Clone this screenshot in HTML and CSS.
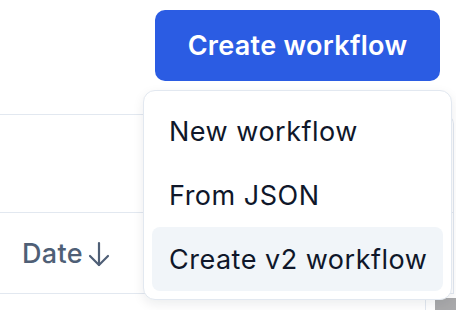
FILE: index.html
```html
<!DOCTYPE html>
<html lang="en">
  <head>
    <meta charset="UTF-8">
    <meta name="viewport" content="width=device-width, initial-scale=1.0">
    <title>Workflows</title>
    <link rel="stylesheet" href="styles.css">
  </head>
  <body>
    <div class="page">
      <div class="toolbar">
        <button class="create-btn">Create workflow</button>
      </div>

      <div class="table">
        <div class="row row-empty"></div>
        <div class="row row-head">
          <span class="col-date">
            Date
            <svg class="sort-icon" width="22" height="26" viewBox="0 0 22 26" fill="none" stroke="currentColor" stroke-width="2.2" stroke-linecap="round" stroke-linejoin="round">
              <path d="M11 2v22"></path>
              <path d="M2 15l9 9 9-9"></path>
            </svg>
          </span>
        </div>
      </div>
      <div class="row-next">
        <span class="cell-end"><span class="cell-thumb"></span></span>
      </div>

      <div class="menu">
        <div class="menu-item">New workflow</div>
        <div class="menu-item">From JSON</div>
        <div class="menu-item active">Create v2 workflow</div>
      </div>
    </div>
  </body>
</html>
```

FILE: styles.css
```css
body {
  margin: 0;
  padding: 0;
  background-color: #fff;
  font-family: Inter, "Noto Sans", sans-serif;
  overflow: hidden;
}

.page {
  position: relative;
  width: 456px;
  height: 310px;
}

.toolbar {
  display: flex;
  justify-content: flex-end;
  padding: 10px 16px 33px;
}

.create-btn {
  height: 71px;
  width: 285px;
  border: none;
  border-radius: 10px;
  background-color: #2b5ce3;
  color: #fff;
  font-family: inherit;
  font-size: 27px;
  font-weight: 600;
  letter-spacing: 0.3px;
  cursor: pointer;
}

.table {
  margin-right: 2px;
  border-top: 1px solid #e2e8f0;
  border-right: 1px solid #e2e8f0;
  border-top-right-radius: 10px;
}

.row {
  border-bottom: 1px solid #e2e8f0;
}

.row-empty {
  height: 97px;
}

.row-head {
  height: 80px;
  display: flex;
  align-items: center;
  padding-left: 22px;
}

.col-date {
  display: flex;
  align-items: center;
  gap: 5px;
  color: #4f5f76;
  font-size: 27px;
  font-weight: 500;
  letter-spacing: 0.3px;
}

.sort-icon {
  margin-top: 2px;
}

.row-next {
  height: 20px;
  display: flex;
  justify-content: flex-end;
}

.cell-end {
  width: 30px;
  border-left: 1px solid #e2e8f0;
  display: flex;
  justify-content: flex-end;
  padding-top: 4px;
}

.cell-thumb {
  width: 21px;
  height: 16px;
  background-color: #a9a9ab;
}

.menu {
  position: absolute;
  left: 143px;
  top: 90px;
  width: 291px;
  padding: 8px;
  background-color: #fff;
  border: 1px solid #e2e8f0;
  border-radius: 12px;
  box-shadow: 0 4px 12px rgba(15, 23, 42, 0.08);
}

.menu-item {
  height: 64px;
  display: flex;
  align-items: center;
  padding-left: 17px;
  border-radius: 8px;
  color: #0f172a;
  font-size: 27px;
  letter-spacing: 0.5px;
}

.menu-item.active {
  background-color: #f1f5f9;
}
```
